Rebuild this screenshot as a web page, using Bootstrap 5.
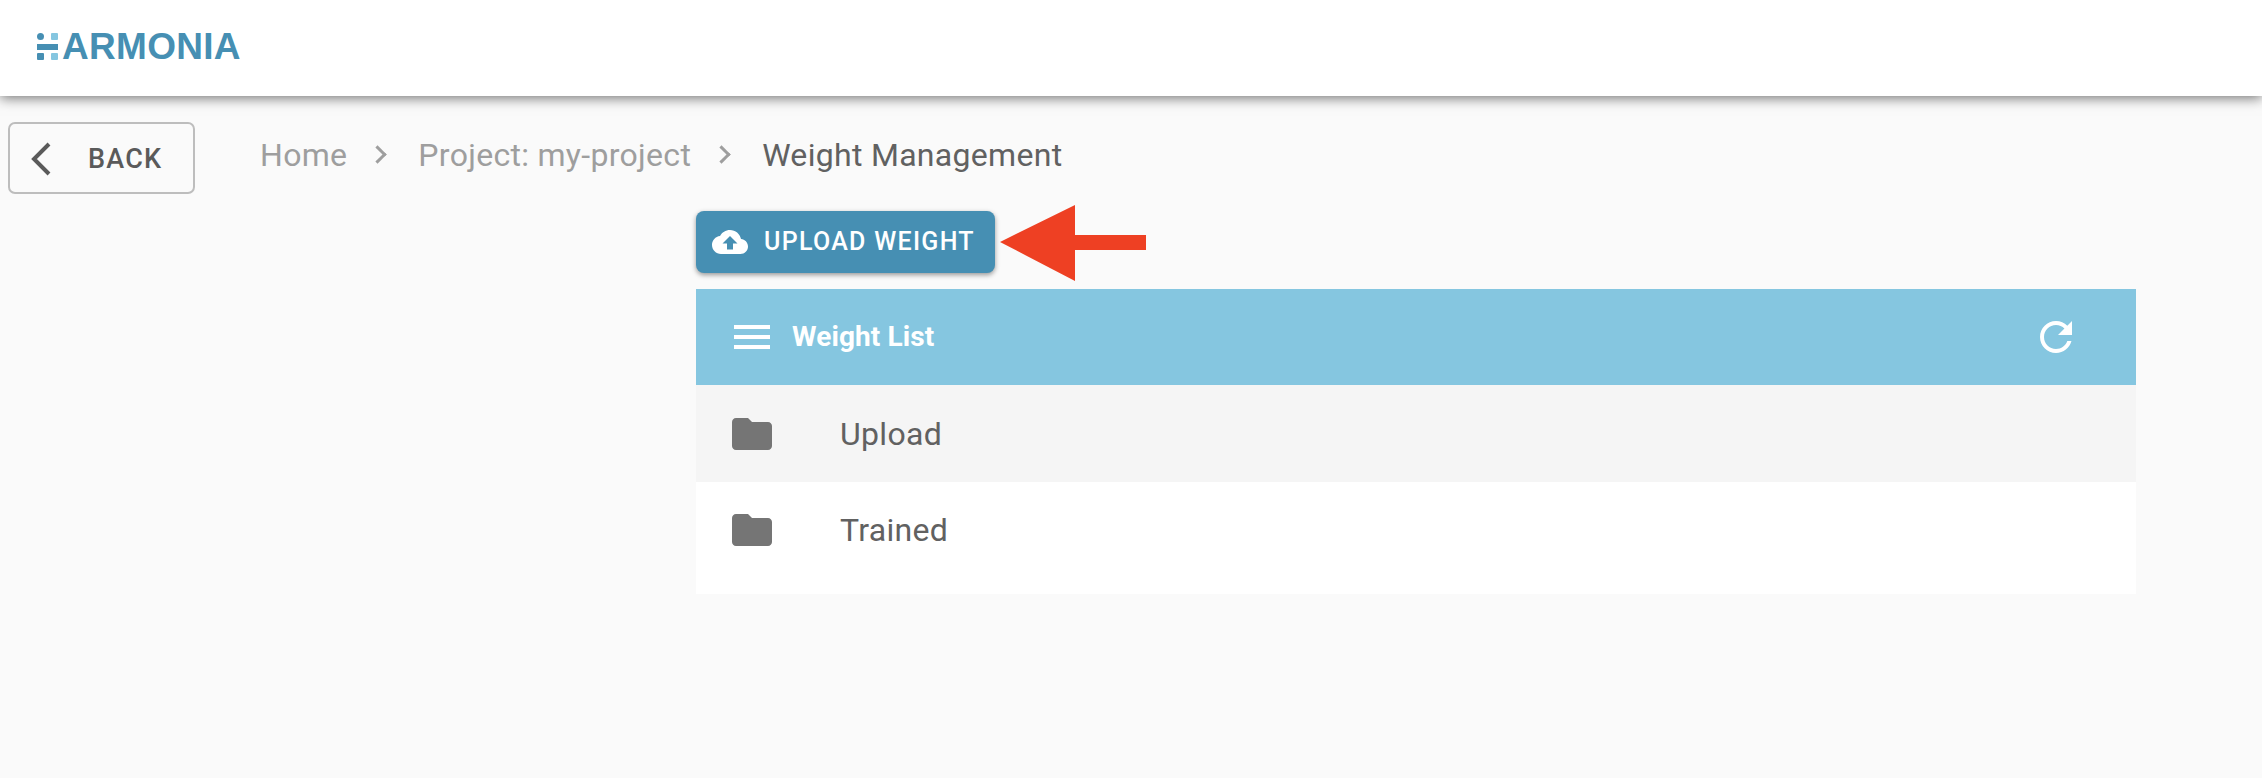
<!DOCTYPE html>
<html lang="en">
<head>
    <meta charset="UTF-8">
    <meta name="viewport" content="width=device-width, initial-scale=1.0">
    <title>Weight Management</title>
    <link href="https://cdn.jsdelivr.net/npm/bootstrap@5.3.0/dist/css/bootstrap.min.css" rel="stylesheet">
    <style>
        body {
            background: #fafafa;
            font-family: Roboto, "Liberation Sans", sans-serif;
            height: 778px;
            overflow: hidden;
        }
        .app-header {
            height: 96px;
            padding: 0 0 0 37px;
            background: #fff;
            box-shadow: 0 2px 12px rgba(0, 0, 0, 0.55);
            align-items: center;
        }
        .logo-wrap {
            color: #468fb3;
            font-family: "Liberation Sans", Arial, sans-serif;
            font-weight: 700;
            font-size: 37px;
            letter-spacing: 0.3px;
            line-height: 1;
            padding: 0;
            margin: -3px 0 0;
        }
        .logo-mark { margin-right: 4px; }
        .top-row { padding: 26px 0 0 8px; height: 115px; }
        .back-btn {
            width: 187px;
            height: 72px;
            border: 2px solid #bdbdbd;
            border-radius: 7px;
            color: #5a5a5a;
            font-size: 27px;
            font-weight: 500;
            letter-spacing: 1.2px;
            padding: 2px 0 0 21px;
            background: transparent;
        }
        .back-btn span { margin-left: 35px; }
        .crumbs {
            margin: -24px 0 0 65px;
            font-size: 32px;
            letter-spacing: 0.3px;
            line-height: 1;
            --bs-breadcrumb-margin-bottom: 0;
        }
        .crumbs .breadcrumb-item { padding: 0; display: flex; align-items: center; color: #616161; }
        .crumbs .breadcrumb-item a { color: #9e9e9e; text-decoration: none; }
        .crumbs .breadcrumb-item + .breadcrumb-item::before {
            content: "";
            width: 13px;
            height: 13px;
            border-top: 3px solid #9e9e9e;
            border-right: 3px solid #9e9e9e;
            transform: rotate(45deg);
            padding: 0;
            margin: 0 34px 0 24px;
        }
        .weight-area { margin-left: 696px; width: 1440px; position: relative; }
        .upload-btn {
            width: 299px;
            height: 62px;
            background: #468fb3;
            border: 0;
            border-radius: 8px;
            color: #fff;
            font-size: 25px;
            font-weight: 500;
            letter-spacing: 1.3px;
            padding: 0 0 0 16px;
            box-shadow: 0 2px 5px rgba(0, 0, 0, 0.4);
            gap: 16px;
            margin-bottom: 16px;
        }
        .arrow-mark { position: absolute; left: 304px; top: -6px; }
        .weight-panel { --bs-card-border-width: 0; --bs-card-border-radius: 0; --bs-card-inner-border-radius: 0; background: #fff; }
        .panel-head {
            height: 96px;
            background: #85c6e0;
            color: #fff;
            font-size: 28px;
            font-weight: 700;
            letter-spacing: 0.1px;
            padding: 0 56px 0 32px;
            border: 0;
        }
        .panel-head .head-title { margin-left: 16px; }
        .weight-rows { --bs-list-group-border-width: 0; --bs-list-group-border-radius: 0; }
        .weight-rows .list-group-item {
            color: #616161;
            font-size: 32px;
            letter-spacing: 0.3px;
            background: transparent;
            padding: 0 0 0 32px;
            height: 97px;
            gap: 64px;
        }
        .weight-rows .list-group-item:first-child { background: #f5f5f5; }
        .weight-rows .list-group-item:last-child { height: 112px; padding-bottom: 17px; }
    </style>
</head>
<body>
    <header class="app-header d-flex">
        <h1 class="logo-wrap d-flex align-items-center">
            <svg class="logo-mark" width="21" height="27" viewBox="0 0 21 27">
                <circle cx="3.5" cy="3.5" r="3.5" fill="#468fb3"/>
                <rect x="14" y="0" width="7" height="7" rx="1" fill="#85c6e0"/>
                <rect x="0" y="11" width="21" height="6" fill="#468fb3"/>
                <rect x="0" y="20" width="7" height="7" rx="1" fill="#468fb3"/>
                <rect x="14" y="20" width="7" height="7" rx="1" fill="#85c6e0"/>
            </svg>
            ARMONIA
        </h1>
    </header>

    <div class="top-row d-flex align-items-start">
        <button class="btn back-btn d-flex align-items-center" type="button">
            <svg width="22" height="34" viewBox="0 0 22 34"><path d="M18 2 3 17l15 15" fill="none" stroke="#5a5a5a" stroke-width="4"/></svg>
            <span>BACK</span>
        </button>
        <nav aria-label="breadcrumb" class="align-self-center">
            <ol class="breadcrumb crumbs">
                <li class="breadcrumb-item"><a href="#">Home</a></li>
                <li class="breadcrumb-item"><a href="#">Project: my-project</a></li>
                <li class="breadcrumb-item active">Weight Management</li>
            </ol>
        </nav>
    </div>

    <main class="weight-area">
        <button class="btn upload-btn d-flex align-items-center" type="button">
            <svg width="36" height="36" viewBox="0 0 24 24"><path fill="#fff" d="M19.35 10.04C18.67 6.59 15.64 4 12 4 9.11 4 6.6 5.64 5.35 8.04 2.34 8.36 0 10.91 0 14c0 3.31 2.69 6 6 6h13c2.76 0 5-2.24 5-5 0-2.64-2.05-4.78-4.65-4.96zM14 13v4h-4v-4H7l5-5 5 5h-3z"/></svg>
            UPLOAD WEIGHT
        </button>
        <svg class="arrow-mark" width="146" height="76" viewBox="0 0 146 76"><path fill="#ee4023" d="M0 37 75 0v30h71v15H75v31z"/></svg>

        <section class="card weight-panel">
            <div class="card-header panel-head d-flex align-items-center">
                <svg width="48" height="48" viewBox="0 0 24 24"><path fill="#fff" d="M3 18h18v-2H3v2zm0-5h18v-2H3v2zm0-5h18V6H3v2z"/></svg>
                <span class="head-title">Weight List</span>
                <svg class="ms-auto" width="48" height="48" viewBox="0 0 24 24"><path fill="#fff" d="M17.65 6.35C16.2 4.9 14.21 4 12 4c-4.42 0-7.99 3.58-7.99 8s3.57 8 7.99 8c3.73 0 6.84-2.55 7.73-6h-2.08c-.82 2.33-3.04 4-5.65 4-3.31 0-6-2.69-6-6s2.69-6 6-6c1.66 0 3.14.69 4.22 1.78L13 11h7V4l-2.35 2.35z"/></svg>
            </div>
            <ul class="list-group weight-rows">
                <li class="list-group-item d-flex align-items-center">
                    <svg width="48" height="48" viewBox="0 0 24 24"><path fill="#757575" d="M10 4H4c-1.1 0-1.99.9-1.99 2L2 18c0 1.1.9 2 2 2h16c1.1 0 2-.9 2-2V8c0-1.1-.9-2-2-2h-8l-2-2z"/></svg>
                    Upload
                </li>
                <li class="list-group-item d-flex align-items-center">
                    <svg width="48" height="48" viewBox="0 0 24 24"><path fill="#757575" d="M10 4H4c-1.1 0-1.99.9-1.99 2L2 18c0 1.1.9 2 2 2h16c1.1 0 2-.9 2-2V8c0-1.1-.9-2-2-2h-8l-2-2z"/></svg>
                    Trained
                </li>
            </ul>
        </section>
    </main>

    <script src="https://cdn.jsdelivr.net/npm/bootstrap@5.3.0/dist/js/bootstrap.bundle.min.js"></script>
</body>
</html>
